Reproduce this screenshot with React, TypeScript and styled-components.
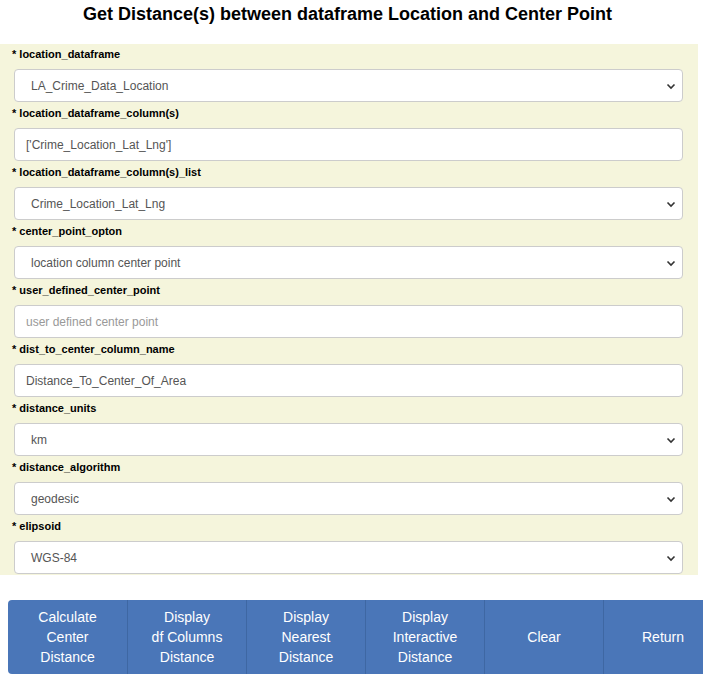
import React from 'react';
import styled, { createGlobalStyle } from 'styled-components';

const GlobalStyle = createGlobalStyle`
  body {
    margin: 0;
    background: #ffffff;
    font-family: 'Liberation Sans', Arial, sans-serif;
  }
`;

const Page = styled.div`
  width: 710px;
  height: 682px;
  overflow: hidden;
`;

const Title = styled.h1`
  margin: 0;
  width: 695px;
  height: 44px;
  padding-top: 4px;
  box-sizing: border-box;
  text-align: center;
  font-size: 18px;
  font-weight: bold;
  color: #000;
`;

const Panel = styled.div`
  width: 698px;
  height: 531px;
  background: #f5f5dc;
  padding: 4px 15px 0 14px;
  box-sizing: border-box;
  overflow: hidden;
`;

const Field = styled.div`
  display: flex;
  flex-direction: column;
  height: 59px;
`;

const Label = styled.label`
  font-size: 11px;
  font-weight: bold;
  color: #000;
  height: 21px;
  line-height: 13px;
  margin-left: -2px;
`;

const boxCss = `
  width: 669px;
  height: 33px;
  box-sizing: border-box;
  border: 1px solid #cccccc;
  border-radius: 4px;
  background: #fff;
  font-family: 'Liberation Sans', Arial, sans-serif;
  font-size: 12px;
  color: #555;
`;

const TextBox = styled.input`
  ${boxCss}
  padding: 0 11px;
  outline: none;
  &::placeholder {
    color: #999;
  }
`;

const SelectWrap = styled.div`
  ${boxCss}
  position: relative;
  display: flex;
  align-items: center;
  padding: 0 16px;
`;

const Chevron = styled.svg`
  position: absolute;
  right: 6px;
  top: 12px;
`;

const ButtonBar = styled.div`
  display: flex;
  width: 695px;
  margin: 25px 0 0 8px;
  border-radius: 4px 0 0 4px;
  overflow: hidden;
`;

const Button = styled.button`
  flex: 0 0 119px;
  height: 74px;
  background: #4a76b8;
  border: none;
  border-left: 1px solid #3e67a3;
  color: #fff;
  font-family: 'Liberation Sans', Arial, sans-serif;
  font-size: 14px;
  line-height: 20px;
  padding: 0;
  &:first-child {
    border-left: none;
  }
`;

const fields: { label: string; kind: 'select' | 'input'; value: string; placeholder?: boolean }[] = [
  { label: 'location_dataframe', kind: 'select', value: 'LA_Crime_Data_Location' },
  { label: 'location_dataframe_column(s)', kind: 'input', value: "['Crime_Location_Lat_Lng']" },
  { label: 'location_dataframe_column(s)_list', kind: 'select', value: 'Crime_Location_Lat_Lng' },
  { label: 'center_point_opton', kind: 'select', value: 'location column center point' },
  { label: 'user_defined_center_point', kind: 'input', value: 'user defined center point', placeholder: true },
  { label: 'dist_to_center_column_name', kind: 'input', value: 'Distance_To_Center_Of_Area' },
  { label: 'distance_units', kind: 'select', value: 'km' },
  { label: 'distance_algorithm', kind: 'select', value: 'geodesic' },
  { label: 'elipsoid', kind: 'select', value: 'WGS-84' },
];

const buttons = [
  ['Calculate', 'Center', 'Distance'],
  ['Display', 'df Columns', 'Distance'],
  ['Display', 'Nearest', 'Distance'],
  ['Display', 'Interactive', 'Distance'],
  ['Clear'],
  ['Return'],
];

export default function App() {
  return (
    <Page>
      <GlobalStyle />
      <Title>Get Distance(s) between dataframe Location and Center Point</Title>
      <Panel>
        {fields.map((f) => (
          <Field key={f.label}>
            <Label>* {f.label}</Label>
            {f.kind === 'select' ? (
              <SelectWrap>
                {f.value}
                <Chevron width="10" height="8" viewBox="0 0 10 8">
                  <path d="M1.5 2.5 L5 6 L8.5 2.5" fill="none" stroke="#333" strokeWidth="1.6" />
                </Chevron>
              </SelectWrap>
            ) : f.placeholder ? (
              <TextBox placeholder={f.value} readOnly />
            ) : (
              <TextBox defaultValue={f.value} readOnly />
            )}
          </Field>
        ))}
      </Panel>
      <ButtonBar>
        {buttons.map((lines, i) => (
          <Button key={i}>
            {lines.map((l, j) => (
              <div key={j}>{l}</div>
            ))}
          </Button>
        ))}
      </ButtonBar>
    </Page>
  );
}
